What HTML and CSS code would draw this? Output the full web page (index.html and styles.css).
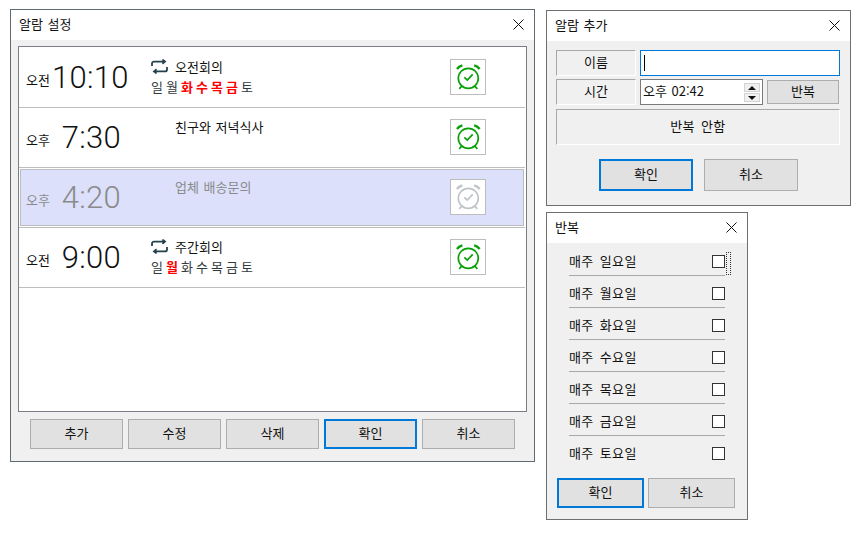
FILE: index.html
```html
<!DOCTYPE html>
<html lang="ko">
<head>
<meta charset="utf-8">
<title>알람 설정</title>
<link rel="stylesheet" href="styles.css">
</head>
<body>
<svg class="defs" width="0" height="0" aria-hidden="true">
  <symbol id="alarm" viewBox="0 0 26 26">
    <g fill="none" stroke="currentColor" stroke-width="1.7">
      <circle cx="13.3" cy="14.3" r="10"/>
      <path d="M6.8 22.2l-2.6 2.6M19.8 22.2l2.6 2.6"/>
    </g>
    <path d="M9.3 13.3l3 2.7 5.4-5.6" fill="none" stroke="currentColor" stroke-width="1.7"/>
    <g fill="none" stroke="currentColor" stroke-width="2.4">
      <path d="M2 5C3.2 3.3 5 2.1 7.4 1.4"/>
      <path d="M24.6 5C23.4 3.3 21.6 2.1 19.2 1.4"/>
    </g>
  </symbol>
  <symbol id="repeat" viewBox="0 0 17 15">
    <g fill="none" stroke="#24424d" stroke-width="1.8">
      <path d="M1 7V4.6C1 3.4 1.9 2.6 3 2.6H13"/>
      <path d="M16 8V10.4C16 11.6 15.1 12.4 14 12.4H4"/>
      <path d="M11.4 .6L14 2.6 11.4 4.8"/>
      <path d="M5.6 10.2L3 12.4 5.6 14.4"/>
    </g>
  </symbol>
</svg>

<section class="win win-main">
  <header class="tbar"><span>알람 설정</span><svg class="close" viewBox="0 0 11 11"><path d="M.5 .5l10 10M10.5 .5l-10 10"/></svg></header>
  <div class="body main-body">
    <div class="list">
      <div class="row first">
        <div class="ampm">오전</div><div class="time wide">10:10</div>
        <div class="info">
          <div class="name"><svg class="rep"><use href="#repeat"/></svg><span>오전회의</span></div>
          <div class="days"><span>일</span><span>월</span><b>화</b><b>수</b><b>목</b><b>금</b><span>토</span></div>
        </div>
        <div class="bell"><svg><use href="#alarm"/></svg></div>
      </div>
      <div class="row">
        <div class="ampm">오후</div><div class="time">7:30</div>
        <div class="info"><div class="name"><i class="rep"></i><span>친구와 저녁식사</span></div></div>
        <div class="bell"><svg><use href="#alarm"/></svg></div>
      </div>
      <div class="row off">
        <div class="ampm">오후</div><div class="time">4:20</div>
        <div class="info"><div class="name"><i class="rep"></i><span>업체 배송문의</span></div></div>
        <div class="bell"><svg><use href="#alarm"/></svg></div>
      </div>
      <div class="row">
        <div class="ampm">오전</div><div class="time">9:00</div>
        <div class="info">
          <div class="name"><svg class="rep"><use href="#repeat"/></svg><span>주간회의</span></div>
          <div class="days"><span>일</span><b>월</b><span>화</span><span>수</span><span>목</span><span>금</span><span>토</span></div>
        </div>
        <div class="bell"><svg><use href="#alarm"/></svg></div>
      </div>
    </div>
    <div class="actions">
      <button class="btn">추가</button><button class="btn">수정</button><button class="btn">삭제</button><button class="btn primary">확인</button><button class="btn">취소</button>
    </div>
  </div>
</section>

<section class="win win-add">
  <header class="tbar"><span>알람 추가</span><svg class="close" viewBox="0 0 11 11"><path d="M.5 .5l10 10M10.5 .5l-10 10"/></svg></header>
  <div class="body add-body">
    <div class="add-row">
      <div class="label">이름</div>
      <div class="input"><i class="caret"></i></div>
    </div>
    <div class="add-row">
      <div class="label">시간</div>
      <div class="spin">
        <span>오후 02:42</span>
        <div class="arrows"><div class="arrow up"></div><div class="arrow down"></div></div>
      </div>
      <button class="btn repeat">반복</button>
    </div>
    <div class="label none">반복 안함</div>
    <div class="add-actions">
      <button class="btn primary">확인</button><button class="btn">취소</button>
    </div>
  </div>
</section>

<section class="win win-rep">
  <header class="tbar"><span>반복</span><svg class="close" viewBox="0 0 11 11"><path d="M.5 .5l10 10M10.5 .5l-10 10"/></svg></header>
  <div class="body rep-body">
    <div class="day focus"><span>매주 일요일</span><i class="check"></i></div>
    <div class="day"><span>매주 월요일</span><i class="check"></i></div>
    <div class="day"><span>매주 화요일</span><i class="check"></i></div>
    <div class="day"><span>매주 수요일</span><i class="check"></i></div>
    <div class="day"><span>매주 목요일</span><i class="check"></i></div>
    <div class="day"><span>매주 금요일</span><i class="check"></i></div>
    <div class="day last"><span>매주 토요일</span><i class="check"></i></div>
    <div class="rep-actions">
      <button class="btn primary">확인</button><button class="btn">취소</button>
    </div>
  </div>
</section>
</body>
</html>
```

FILE: styles.css
```css
* { box-sizing: border-box; }
html, body { margin: 0; padding: 0; }
body {
  width: 861px; height: 533px; background: #fff; position: relative; overflow: hidden;
  font-family: "Noto Sans CJK KR", "Noto Sans", sans-serif; font-size: 13px; word-spacing: 1px; color: #111;
}
.defs { position: absolute; }

.win { position: absolute; border: 1px solid #6f6f6f; background: #f0f0f0; display: flex; flex-direction: column; }
.win-main { left: 10px; top: 9px; width: 525px; height: 453px; border-color: #5e6b72; }
.win-add { left: 546px; top: 10px; width: 305px; height: 196px; }
.win-rep { left: 546px; top: 212px; width: 202px; height: 308px; }

.tbar { height: 30px; flex: none; background: #fff; display: flex; align-items: center; justify-content: space-between; padding: 0 10px 2px 8px; }
.tbar span { line-height: 28px; }
.close { width: 11px; height: 11px; }
.close path { fill: none; stroke: #111; stroke-width: 1; }

.body { flex: 1; display: flex; flex-direction: column; }
.main-body { padding: 6px 7px 0; }

.list { height: 366px; flex: none; background: #fff; border: 1px solid #7a7f85; }
.row { height: 60px; margin-right: 1px; border-bottom: 1px solid #bdbdbd; display: flex; align-items: center; padding-left: 7px; }
.row.first { height: 61px; padding-top: 1px; }
.ampm { width: 26px; line-height: 16px; margin-top: 4px; flex: none; }
.time { width: 76px; flex: none; font-family: Roboto, "Liberation Sans", sans-serif; font-weight: 300; font-size: 31px; line-height: 34px; text-align: right; padding-right: 7px; white-space: nowrap; letter-spacing: .3px; }
.time.wide { padding-right: 0; text-align: left; }
.info { width: 322px; flex: none; padding-left: 23px; align-self: flex-start; padding-top: 10px; }
.name { display: flex; align-items: center; height: 17px; }
.rep { width: 17px; height: 15px; margin-right: 7px; flex: none; display: block; }
.days { display: flex; gap: 3px; margin-top: 3px; height: 17px; line-height: 17px; color: #333b40; }
.days b { color: #f00; font-weight: 700; }
.days span, .days b { width: 12px; text-align: center; }
.bell { width: 36px; height: 36px; flex: none; margin-top: -1px; border: 1px solid #bdbdbd; background: #fff; display: flex; align-items: center; justify-content: center; color: #0aa00a; }
.bell svg { width: 26px; height: 26px; display: block; }
.off { background: #dce0fa; box-shadow: inset 0 0 0 1px #fff, inset 0 0 0 2px #bdbdbd; color: #8a8a8a; }
.off .bell { color: #c0c4c8; }

.btn { font: inherit; word-spacing: inherit; color: #111; background: #e1e1e1; border: 1px solid #adadad; padding: 0 0 3px; height: 30px; }
.btn.primary { border: 2px solid #0078d7; }

.actions { display: flex; gap: 5px; padding: 7px 0 0 12px; }
.actions .btn { width: 93px; }

.add-body { padding: 9px 9px 0; }
.add-row { display: flex; gap: 4px; height: 26px; margin-bottom: 3px; align-items: center; }
.label { width: 80px; height: 26px; flex: none; display: flex; align-items: center; justify-content: center; padding-bottom: 3px;
  border: 1px solid #fff; border-top-color: #a8a8a8; border-left-color: #a8a8a8; }
.input { width: 200px; height: 26px; background: #fff; border: 1px solid #0078d7; padding: 4px 3px; }
.caret { display: block; width: 1px; height: 16px; background: #000; }
.spin { width: 123px; height: 26px; background: #fff; border: 1px solid #7a7a7a; padding: 0 2px; display: flex; align-items: center; justify-content: space-between; }
.spin span { margin-top: -3px; }
.arrows { width: 16px; display: flex; flex-direction: column; gap: 1px; }
.arrow { height: 9px; background: #f0f0f0; border: 1px solid #d4d4d4; position: relative; }
.arrow::after { content: ""; position: absolute; left: 3px; border-style: solid; border-color: transparent; border-width: 0 4px; }
.arrow.up::after { top: 2px; border-bottom: 4px solid #111; }
.arrow.down::after { top: 2px; border-top: 4px solid #111; }
.btn.repeat { width: 72px; height: 24px; }
.label.none { width: 284px; height: 36px; margin-top: 1px; letter-spacing: .4px; word-spacing: 2px; }
.add-actions { display: flex; gap: 11px; padding: 14px 0 0 43px; }
.add-actions .btn { width: 94px; height: 32px; }

.rep-body { padding: 1px 0 0 22px; }
.day { width: 156px; height: 32px; display: flex; align-items: center; justify-content: space-between; border-bottom: 1px solid #a8a8a8; padding-top: 3px; position: relative; letter-spacing: .4px; word-spacing: 2px; }
.day span { margin-top: -2px; }
.day.last { border-bottom: 0; padding-top: 2px; }
.check { width: 13px; height: 13px; background: #fff; border: 1px solid #333; display: block; }
.focus::after { content: ""; position: absolute; right: -6px; top: 8px; width: 3px; height: 21px; border: 1px dotted #333; }
.rep-actions { display: flex; gap: 4px; margin: 10px 0 0 -12px; }
.rep-actions .btn { width: 87px; height: 30px; }
```
